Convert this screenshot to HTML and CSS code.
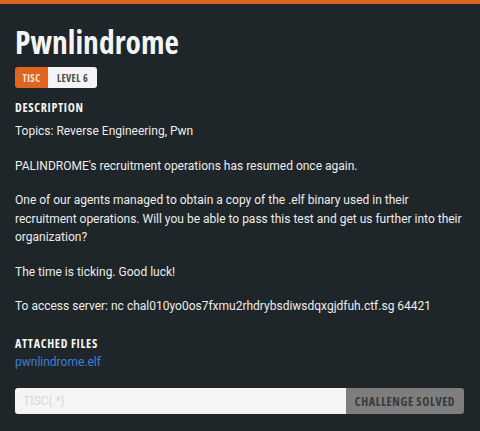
FILE: index.html
```html
<!DOCTYPE html>
<html>
<head>
<meta charset="utf-8">
<link rel="stylesheet" href="styles.css">
</head>
<body>
<div class="card">
  <h1 class="title">Pwnlindrome</h1>
  <div class="tags">
    <span class="tag tag-org">TISC</span><span class="tag tag-level">LEVEL 6</span>
  </div>
  <h2 class="section-title">DESCRIPTION</h2>
  <div class="desc">
    <p>Topics: Reverse Engineering, Pwn</p>
    <p>PALINDROME's recruitment operations has resumed once again.</p>
    <p>One of our agents managed to obtain a copy of the .elf binary used in their recruitment operations. Will you be able to pass this test and get us further into their organization?</p>
    <p>The time is ticking. Good luck!</p>
    <p>To access server: nc chal010yo0os7fxmu2rhdrybsdiwsdqxgjdfuh.ctf.sg 64421</p>
  </div>
  <h2 class="section-title files-title">ATTACHED FILES</h2>
  <a class="file" href="#">pwnlindrome.elf</a>
  <form class="flag-form">
    <input class="flag-input" type="text" placeholder="TISC{.*}">
    <button class="flag-btn" type="button">CHALLENGE SOLVED</button>
  </form>
</div>
</body>
</html>
```
FILE: styles.css
```css
html, body {
  margin: 0;
  padding: 0;
  background: #1f2629;
}
body {
  width: 480px;
  height: 431px;
  overflow: hidden;
}
.card {
  border-top: 4px solid #e0661f;
  padding: 20px 16px 0 15px;
  height: 431px;
  box-sizing: border-box;
  color: #f2f2f2;
  font-family: Roboto, "Noto Sans", sans-serif;
}
.title,
.tag,
.section-title,
.flag-btn {
  font-family: "Open Sans", sans-serif;
  font-stretch: 75%;
  font-weight: bold;
}
.title {
  margin: 0;
  font-size: 31.5px;
  line-height: 36px;
  color: #f4f4f4;
}
.tags {
  display: flex;
  margin-top: 7px;
  height: 21px;
}
.tag {
  display: flex;
  align-items: center;
  justify-content: center;
  box-sizing: border-box;
  font-size: 10px;
  letter-spacing: 0.4px;
}
.tag-org {
  width: 33px;
  background: #e0661f;
  color: #fbe6d8;
  border-radius: 3px 0 0 3px;
}
.tag-level {
  width: 49px;
  background: #f4f4f4;
  color: #4a4a4a;
  border-radius: 0 3px 3px 0;
}
.section-title {
  margin: 13px 0 7px;
  font-size: 12px;
  line-height: 14px;
  letter-spacing: 0.7px;
  color: #f4f4f4;
}
.desc {
  font-size: 12px;
  line-height: 18.5px;
  color: #ececec;
}
.desc p {
  margin: 0 0 16px;
}
.files-title {
  margin-top: 21px;
  margin-bottom: 2px;
}
.file {
  display: block;
  font-size: 12px;
  line-height: 18.5px;
  color: #3d7fd6;
  text-decoration: none;
}
.flag-form {
  display: flex;
  margin-top: 17px;
  width: 449px;
  height: 26px;
}
.flag-input {
  flex: 1;
  border: none;
  margin: 0;
  padding: 0 12px 0 8px;
  background: #f5f5f5;
  border-radius: 3px 0 0 3px;
  font-family: Roboto, sans-serif;
  font-size: 12px;
  outline: none;
}
.flag-input::placeholder {
  color: #d8d8d8;
}
.flag-btn {
  margin: 0;
  border: none;
  width: 118px;
  background: #7e7e7e;
  color: #3a3a3a;
  border-radius: 0 3px 3px 0;
  font-size: 12px;
  letter-spacing: 0.6px;
  padding: 0;
}
```
